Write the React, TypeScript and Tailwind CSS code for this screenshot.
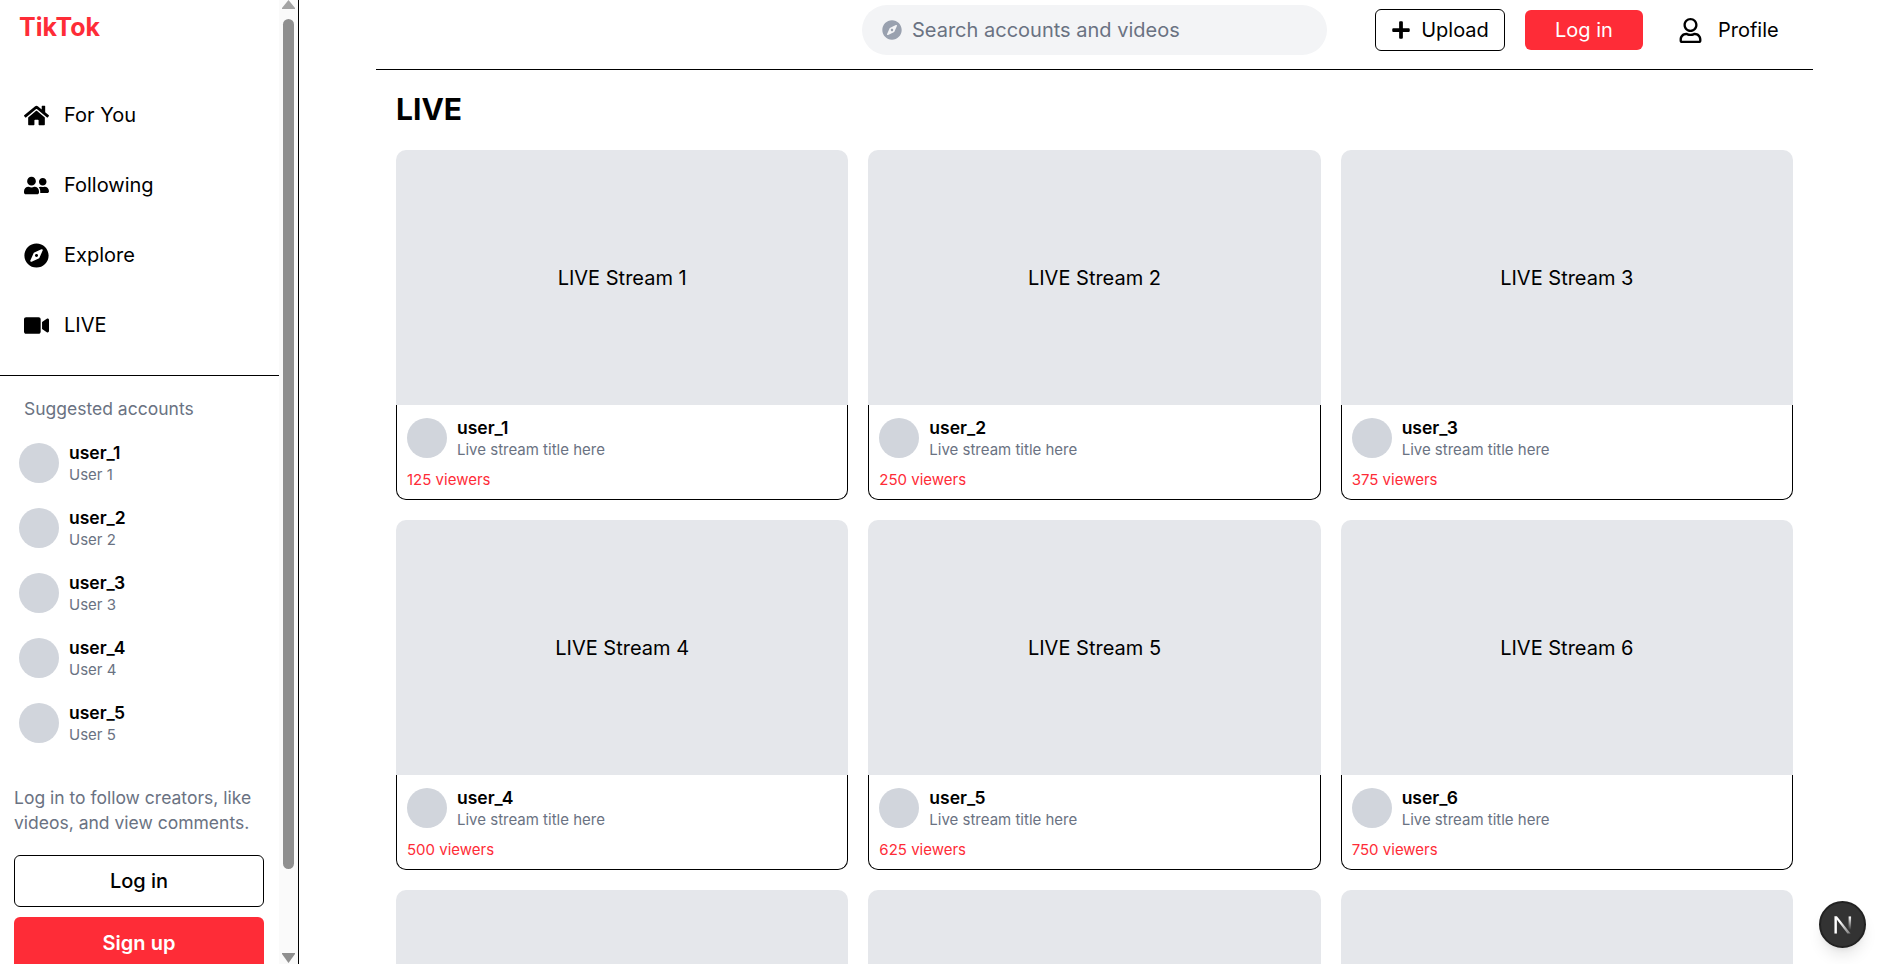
import { FaCompass, FaHome, FaPlus, FaRegUser, FaUserFriends, FaVideo } from 'react-icons/fa';

const navItems = [
  { label: 'For You', icon: FaHome },
  { label: 'Following', icon: FaUserFriends },
  { label: 'Explore', icon: FaCompass },
  { label: 'LIVE', icon: FaVideo },
];

const accounts = [1, 2, 3, 4, 5];

const streams = [
  { id: 1, viewers: 125 },
  { id: 2, viewers: 250 },
  { id: 3, viewers: 375 },
  { id: 4, viewers: 500 },
  { id: 5, viewers: 625 },
  { id: 6, viewers: 750 },
  { id: 7, viewers: 875 },
  { id: 8, viewers: 1000 },
  { id: 9, viewers: 1125 },
];

function Scrollbar() {
  return (
    <div className="flex h-screen w-[19px] shrink-0 flex-col bg-[#fafafa]">
      <svg className="ml-[3px] h-[9px] w-[13px]" viewBox="0 0 13 9">
        <path d="M6.5 0 13 8v1H0V8z" fill="#a3a3a3" />
      </svg>
      <div className="mt-[10px] ml-1 h-[850px] w-[11px] rounded-full bg-[#8f8f8f]" />
      <svg className="mt-auto mb-px ml-[3px] h-[10px] w-[13px]" viewBox="0 0 13 10">
        <path d="M0 0h13v1L6.5 10 0 1z" fill="#8f8f8f" />
      </svg>
    </div>
  );
}

function Sidebar() {
  return (
    <aside className="flex h-screen w-[299px] shrink-0 border-r border-black">
      <div className="h-screen w-[279px] shrink-0 overflow-hidden">
        <div className="pt-2.5 pl-[19px] text-[25px] leading-[35px] font-bold text-[#fe2c37]">TikTok</div>
        <nav className="mt-[35px] flex flex-col border-b border-black pb-[15px]">
          {navItems.map((item) => (
            <div key={item.label} className="flex h-[70px] items-center gap-[15px] px-6 text-xl">
              <item.icon className="h-[25px] w-[25px] text-black" />
              <span>{item.label}</span>
            </div>
          ))}
        </nav>
        <div className="pt-5 pl-[19px]">
          <p className="mb-[9px] pl-[5px] text-[17.5px] leading-[25px] text-gray-500">Suggested accounts</p>
          <div className="flex flex-col">
            {accounts.map((n) => (
              <div key={n} className="flex h-[65px] items-center gap-2.5">
                <div className="h-10 w-10 rounded-full bg-gray-300" />
                <div>
                  <p className="text-[17.5px] leading-[25px] font-semibold">user_{n}</p>
                  <p className="text-[15px] leading-5 text-gray-500">User {n}</p>
                </div>
              </div>
            ))}
          </div>
        </div>
        <div className="pt-[30px] pr-[15px] pl-3.5">
          <p className="text-[17.5px] leading-[25px] text-gray-500">Log in to follow creators, like videos, and view comments.</p>
          <button className="mt-5 h-[52px] w-full rounded-md border border-black text-xl font-medium">Log in</button>
          <button className="mt-2.5 h-[52px] w-full rounded-md bg-[#fe2c37] text-xl font-semibold text-white">Sign up</button>
        </div>
      </div>
      <Scrollbar />
    </aside>
  );
}

function StreamCard({ id, viewers }: { id: number; viewers: number }) {
  return (
    <div>
      <div className="flex h-[255px] items-center justify-center rounded-t-[10px] bg-gray-200 text-xl">LIVE Stream {id}</div>
      <div className="h-[95px] rounded-b-[10px] border border-t-0 border-black px-2.5 pt-2.5">
        <div className="flex items-center gap-2.5">
          <div className="h-10 w-10 rounded-full bg-gray-300" />
          <div>
            <p className="text-[17.5px] leading-[25px] font-semibold">user_{id}</p>
            <p className="text-[15px] leading-5 text-gray-500">Live stream title here</p>
          </div>
        </div>
        <p className="mt-2.5 text-[15px] leading-5 text-[#fe2c37]">{viewers} viewers</p>
      </div>
    </div>
  );
}

function DevBadge() {
  return (
    <div className="absolute right-[11px] bottom-[16px] flex h-[47px] w-[47px] items-center justify-center rounded-full border-2 border-[#222] bg-[#333] shadow-lg">
      <svg className="h-[22px] w-[22px]" viewBox="0 0 18 18">
        <defs>
          <linearGradient id="nextDiag" x1="0" y1="0" x2="1" y2="1">
            <stop offset="0.3" stopColor="#fff" />
            <stop offset="1" stopColor="#fff" stopOpacity="0.35" />
          </linearGradient>
          <linearGradient id="nextStem" x1="0" y1="0" x2="0" y2="1">
            <stop offset="0" stopColor="#fff" />
            <stop offset="1" stopColor="#fff" stopOpacity="0" />
          </linearGradient>
        </defs>
        <path d="M2 2h2v14H2z" fill="#fff" />
        <path d="M2 2h2.2l11 14h-2.6z" fill="url(#nextDiag)" />
        <rect x="13.6" y="2" width="2" height="11" fill="url(#nextStem)" />
      </svg>
    </div>
  );
}

export default function App() {
  return (
    <div className="relative flex h-screen overflow-hidden bg-white font-['Inter',sans-serif] text-black">
      <Sidebar />
      <main className="ml-[77px] w-[1437px]">
        <header className="flex h-[70px] items-center border-b border-black pb-[9px] pl-[486px]">
          <div className="flex h-[50px] w-[465px] items-center gap-2.5 rounded-full bg-gray-100 px-5 text-xl text-gray-500">
            <FaCompass className="h-5 w-5 text-gray-400" />
            Search accounts and videos
          </div>
          <button className="ml-12 flex h-[42px] w-[130px] items-center justify-center gap-2.5 rounded-md border border-black text-xl">
            <FaPlus className="h-5 w-5" />
            Upload
          </button>
          <button className="ml-5 h-10 w-[118px] rounded-md bg-[#fe2c37] text-xl text-white">Log in</button>
          <div className="ml-[35px] flex items-center gap-[15px] text-xl">
            <FaRegUser className="h-[25px] w-[25px]" />
            Profile
          </div>
        </header>
        <div className="px-5 pt-[19px]">
          <h1 className="mb-[21px] text-3xl leading-10 font-bold">LIVE</h1>
          <div className="grid grid-cols-3 gap-5">
            {streams.map((s) => (
              <StreamCard key={s.id} id={s.id} viewers={s.viewers} />
            ))}
          </div>
        </div>
      </main>
      <DevBadge />
    </div>
  );
}
